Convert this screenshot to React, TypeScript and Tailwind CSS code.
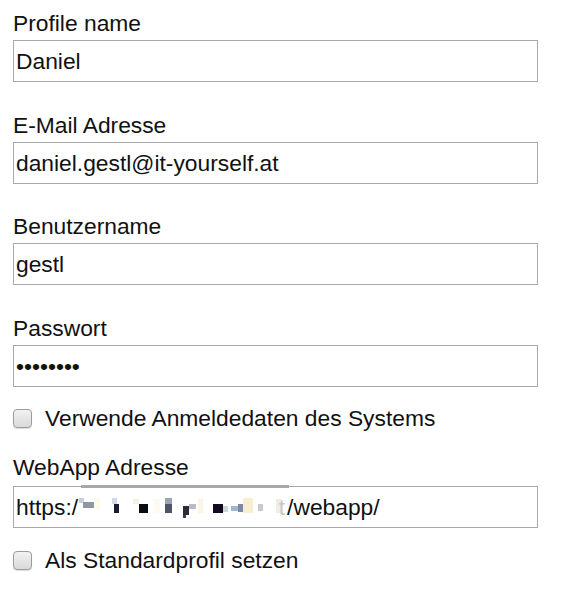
import React from "react";

function Field({ label, value, type = "text" }: { label: string; value: string; type?: string }) {
  return (
    <div className="mb-[29.7px]">
      <div className="leading-[26px]">{label}</div>
      <input
        type={type}
        readOnly
        value={value}
        className="mt-[4px] block h-[42px] w-[525px] border border-[#a9a9a9] bg-white px-[2px] pt-[1px] text-[22.8px] text-[#111] outline-none font-['Liberation_Sans',Arial,sans-serif]"
      />
    </div>
  );
}

function Check({ label }: { label: string }) {
  return (
    <div className="flex h-[26px] items-center leading-[26px]">
      <span className="block h-[19px] w-[19px] rounded-[4px] border border-[#9c9c9c] bg-gradient-to-b from-[#f2f2f2] to-[#d9d9d9] shadow-[0_1px_1px_rgba(0,0,0,0.15)]" />
      <span className="ml-[13px]">{label}</span>
    </div>
  );
}

const blocks: { l: number; t: number; w: number; h: number; c: string }[] = [
  { l: 1, t: 11, w: 5, h: 5, c: "#c9ced6" },
  { l: 5, t: 15, w: 11, h: 6, c: "#8d97a6" },
  { l: 16, t: 12, w: 6, h: 10, c: "#fffbe8" },
  { l: 34, t: 11, w: 5, h: 6, c: "#d4d8e4" },
  { l: 36, t: 17, w: 5, h: 9, c: "#1a1c33" },
  { l: 55, t: 12, w: 6, h: 5, c: "#f3f0e6" },
  { l: 61, t: 17, w: 9, h: 9, c: "#0b0b12" },
  { l: 76, t: 12, w: 6, h: 14, c: "#fdfaf0" },
  { l: 87, t: 11, w: 7, h: 6, c: "#9ca3b6" },
  { l: 87, t: 17, w: 7, h: 9, c: "#4f5568" },
  { l: 105, t: 19, w: 6, h: 9, c: "#2a2d36" },
  { l: 105, t: 28, w: 3, h: 3, c: "#3c3f48" },
  { l: 111, t: 17, w: 7, h: 5, c: "#b8bcc4" },
  { l: 120, t: 12, w: 5, h: 14, c: "#fbf6e2" },
  { l: 135, t: 17, w: 10, h: 9, c: "#130a22" },
  { l: 145, t: 19, w: 5, h: 6, c: "#cfd3da" },
  { l: 153, t: 19, w: 7, h: 5, c: "#9fb8d4" },
  { l: 160, t: 17, w: 5, h: 8, c: "#7e8aa0" },
  { l: 165, t: 11, w: 10, h: 15, c: "#f8efcf" },
  { l: 180, t: 17, w: 5, h: 7, c: "#c8c8d0" },
  { l: 198, t: 12, w: 6, h: 14, c: "#f0ede6" },
];

export default function App() {
  return (
    <div className="bg-white pl-[13px] pt-[10px] text-[22.8px] text-[#111] font-['Liberation_Sans',Arial,sans-serif]">
      <Field label="Profile name" value="Daniel" />
      <Field label="E-Mail Adresse" value="daniel.gestl@it-yourself.at" />
      <Field label="Benutzername" value="gestl" />
      <div>
        <div className="leading-[26px]">Passwort</div>
        <input
          type="password"
          readOnly
          value="12345678"
          className="mt-[4px] block h-[42px] w-[525px] border border-[#a9a9a9] bg-white px-[2px] pt-[1px] text-[22.8px] text-[#111] outline-none font-['Liberation_Sans',Arial,sans-serif]"
        />
      </div>
      <div className="mt-[18px]">
        <Check label="Verwende Anmeldedaten des Systems" />
      </div>
      <div className="mt-[23px]">
        <div className="leading-[26px]">WebApp Adresse</div>
        <div className="relative mt-[6px] flex h-[42px] w-[525px] items-center border border-[#a9a9a9] bg-white px-[2px] pt-[1px]">
          <span className="absolute left-[67px] top-[-2px] h-[3px] w-[208px] bg-[#a8a8a8]" />
          <span>https:/</span>
          <span className="relative block h-[40px] w-[209px]">
            {blocks.map((b, i) => (
              <span
                key={i}
                className="absolute block"
                style={{ left: b.l, top: b.t - 1, width: b.w, height: b.h, background: b.c }}
              />
            ))}
            <span className="absolute right-[2px] top-[6px] leading-[26px] text-[#c8c8c8]">t</span>
          </span>
          <span>/webapp/</span>
        </div>
      </div>
      <div className="mt-[19px] pb-[30px]">
        <Check label="Als Standardprofil setzen" />
      </div>
    </div>
  );
}
